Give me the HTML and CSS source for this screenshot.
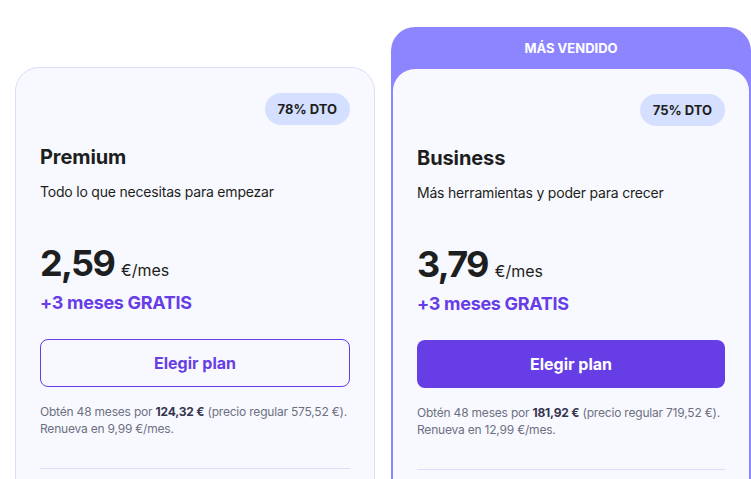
FILE: index.html
```html
<!DOCTYPE html>
<html>
  <head>
    <meta charset="UTF-8" />
    <meta name="viewport" content="width=device-width, initial-scale=1.0" />
    <title>Planes</title>
    <link rel="stylesheet" href="styles.css">
  </head>

  <body>
    <div class="plans">
      <div class="plan plan-left">
        <div class="plan-card">
          <div class="badge-row"><span class="badge">78% DTO</span></div>
          <h2 class="plan-name">Premium</h2>
          <p class="plan-desc">Todo lo que necesitas para empezar</p>
          <div class="price">
            <span class="price-amount">2,59</span>
            <span class="price-unit">€/mes</span>
          </div>
          <div class="free">+3 meses GRATIS</div>
          <button class="button button-outline">Elegir plan</button>
          <p class="terms">
            Obtén 48 meses por <b>124,32 €</b> (precio regular 575,52 €).
            Renueva en 9,99 €/mes.
          </p>
          <hr class="divider" />
        </div>
      </div>

      <div class="plan plan-featured">
        <div class="featured-label">MÁS VENDIDO</div>
        <div class="plan-card">
          <div class="badge-row"><span class="badge">75% DTO</span></div>
          <h2 class="plan-name">Business</h2>
          <p class="plan-desc">Más herramientas y poder para crecer</p>
          <div class="price">
            <span class="price-amount">3,79</span>
            <span class="price-unit">€/mes</span>
          </div>
          <div class="free">+3 meses GRATIS</div>
          <button class="button button-filled">Elegir plan</button>
          <p class="terms">
            Obtén 48 meses por <b>181,92 €</b> (precio regular 719,52 €).
            Renueva en 12,99 €/mes.
          </p>
          <hr class="divider" />
        </div>
      </div>
    </div>
  </body>
</html>
```

FILE: styles.css
```css
body {
  margin: 0;
  background-color: #fff;
  font-family: "Inter", "Noto Sans", sans-serif;
  color: #1d1e20;
  overflow: hidden;
}

.plans {
  display: flex;
  align-items: flex-start;
  gap: 16px;
  padding: 27px 0 0 15px;
}

.plan {
  width: 360px;
  flex-shrink: 0;
  box-sizing: border-box;
}

.plan-left {
  margin-top: 40px;
  border: 1px solid #dadef9;
  border-radius: 24px;
  background-color: #f8f9ff;
}

.plan-featured {
  background-color: #8c85ff;
  border-radius: 24px;
  padding: 0 2px;
}

.featured-label {
  height: 42px;
  display: flex;
  align-items: center;
  justify-content: center;
  color: #fff;
  font-size: 13px;
  font-weight: 700;
}

.plan-featured .plan-card {
  background-color: #f8f9ff;
  border-radius: 22px 22px 0 0;
  padding-left: 24px;
  padding-right: 24px;
}

.plan-card {
  padding: 25px 24px 0;
  min-height: 440px;
}

.badge-row {
  display: flex;
  justify-content: flex-end;
}

.badge {
  background-color: #d5dfff;
  border-radius: 16px;
  height: 32px;
  padding: 0 13px;
  display: flex;
  align-items: center;
  font-size: 13px;
  font-weight: 700;
}

.plan-name {
  margin: 20px 0 0;
  font-size: 20px;
  font-weight: 700;
  line-height: 24px;
  letter-spacing: -0.1px;
}

.plan-desc {
  margin: 13px 0 0;
  font-size: 14px;
  line-height: 20px;
  letter-spacing: -0.2px;
}

.price {
  margin-top: 37px;
  display: flex;
  align-items: baseline;
  gap: 7px;
}

.price-amount {
  font-size: 36px;
  font-weight: 700;
  line-height: 48px;
  letter-spacing: -1.7px;
}

.price-unit {
  font-size: 16px;
}

.free {
  margin-top: 4px;
  color: #673de6;
  font-size: 18px;
  font-weight: 700;
  line-height: 24px;
  letter-spacing: -0.3px;
}

.button {
  display: block;
  width: 100%;
  height: 48px;
  margin-top: 24px;
  border-radius: 8px;
  font-family: inherit;
  font-size: 16px;
  font-weight: 700;
  cursor: pointer;
}

.button-outline {
  background-color: transparent;
  border: 1px solid #673de6;
  color: #673de6;
}

.button-filled {
  background-color: #673de6;
  border: none;
  color: #fff;
}

.terms {
  margin: 16px 0 0;
  font-size: 12px;
  line-height: 17px;
  letter-spacing: -0.2px;
  color: #6d7081;
}

.terms b {
  color: #36344d;
  font-weight: 700;
}

.divider {
  margin: 31px 0 0;
  border: none;
  border-top: 1px solid #dadef9;
}
```
